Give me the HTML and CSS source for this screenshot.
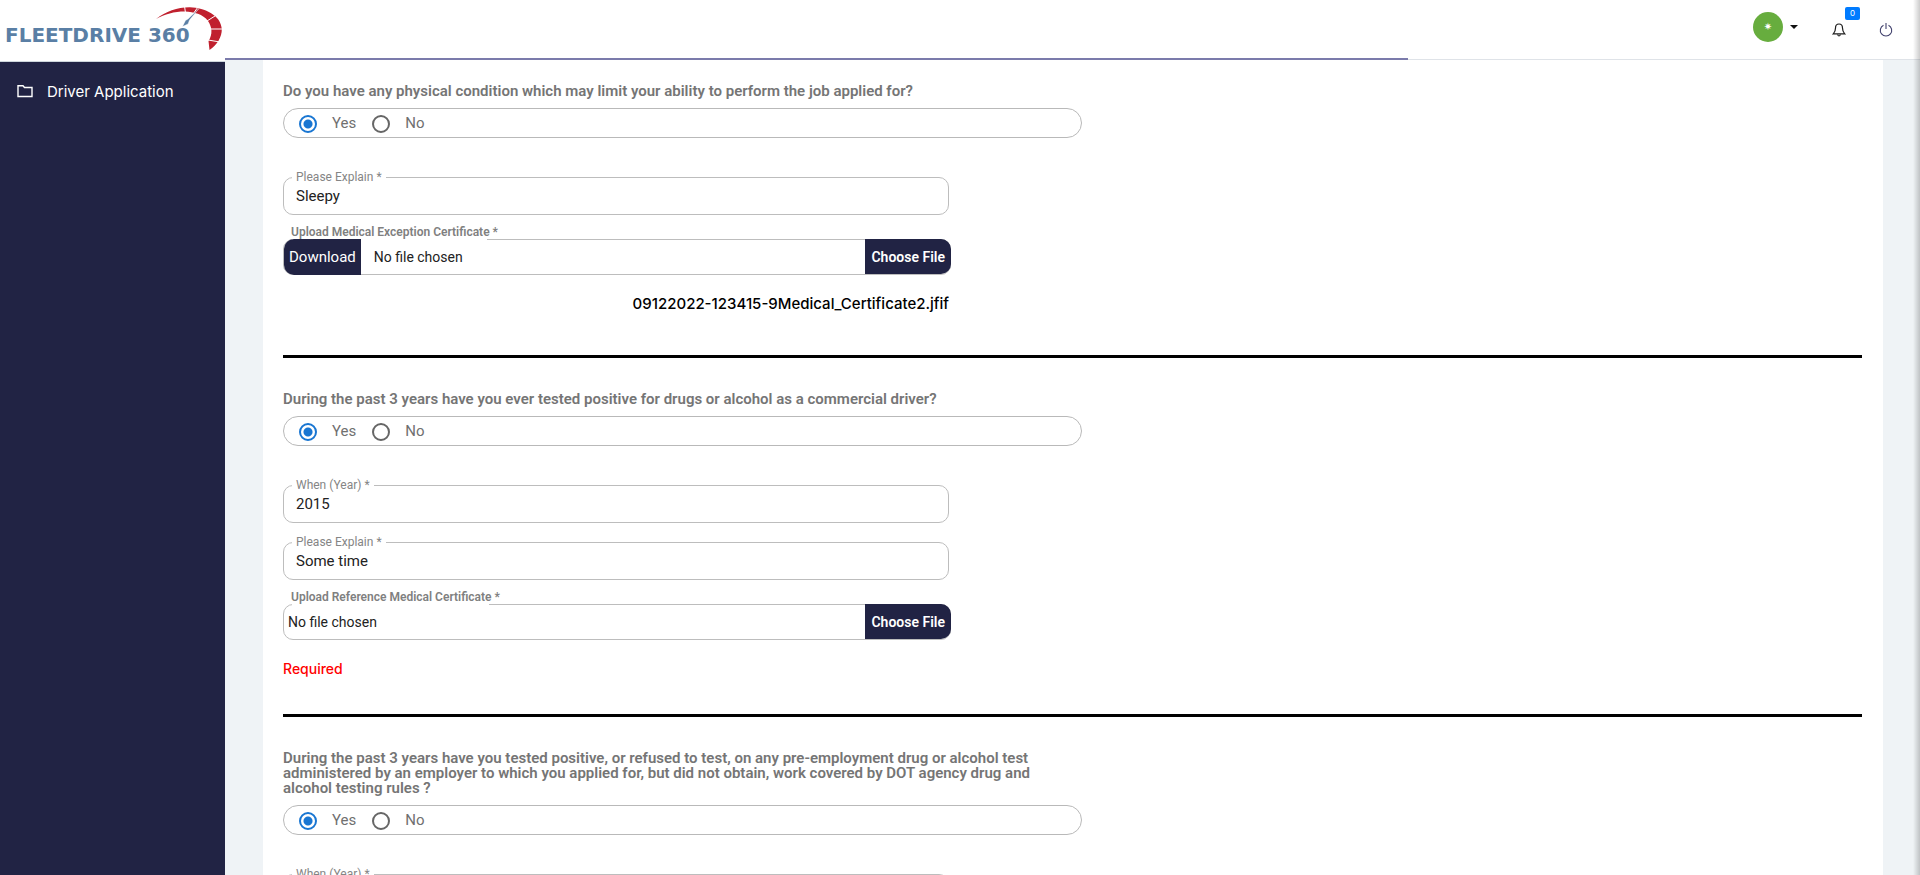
FILE: index.html
```html
<!DOCTYPE html>
<html lang="en">
<head>
<meta charset="utf-8">
<title>FleetDrive 360 - Driver Application</title>
<link rel="stylesheet" href="styles.css">
</head>
<body>
<div class="app">
  <aside class="sidebar">
    <a class="brand" href="#" aria-label="FleetDrive 360 home">
      <svg class="logo" width="225" height="60" viewBox="0 0 225 60">
        <text class="logo-text" x="5" y="42">FLEETDRIVE 360</text>
        <path d="M156 19C166 11 178 7 190 7.200C205 8 221 15 221.800 29C222 37 217 45 209.500 50L208.500 41C213 34 212 27 208 21C203 14 194 12 185 11.500C174 11.500 165 14 156 19Z" fill="#c0202e"/>
        <path d="M184.500 6l1 7M198 7l-5 7M215 16l-8 5M222 29h-11M220 42l-12-2" stroke="#fff" stroke-width="1"/>
        <path d="M199 8.500L189.500 20L188 24L182.500 26.500L185.500 20.500L188 19Z" fill="#5a7fa5" stroke="#fff" stroke-width=".4"/>
      </svg>
    </a>
    <nav class="menu">
      <a class="menu-link" href="#">
        <svg width="16" height="14" viewBox="0 0 16 14" fill="none" stroke="currentColor" stroke-width="1.400"><path d="M1 1.700h5l1.500 1.800H15v9H1z"/></svg>
        Driver Application
      </a>
    </nav>
  </aside>
  <div class="page">
    <header class="topbar">
      <button class="avatar-button" aria-label="Account menu">
        <span class="avatar">✷</span>
        <span class="caret"></span>
      </button>
      <button class="icon-button bell" aria-label="Notifications">
        <svg width="14" height="14" viewBox="0 0 14 14" fill="none" stroke="#1c1c1c" stroke-width="1.200"><path d="M7 1C4.700 1 3.500 2.800 3.500 5C3.500 8 2.800 9.300 1.300 10.800H12.700C11.200 9.300 10.500 8 10.500 5C10.500 2.800 9.300 1 7 1Z"/><path d="M5.500 11.500Q7 14.500 8.500 11.500"/></svg>
        <span class="count">0</span>
      </button>
      <button class="icon-button" aria-label="Sign out">
        <svg width="14" height="14" viewBox="0 0 14 14" fill="none" stroke="#42426e" stroke-width="1.100"><path d="M4.500 2.200A5.700 5.700 0 1 0 9.500 2.200M7 0V6"/></svg>
      </button>
      <div class="progress"></div>
    </header>
    <main class="content">
      <form class="card">
        <section class="question">
          <p class="prompt" id="q1">Do you have any physical condition which may limit your ability to perform the job applied for?</p>
          <div class="choices" role="radiogroup" aria-labelledby="q1">
            <label class="choice"><input type="radio" name="q1" checked>Yes</label>
            <label class="choice"><input type="radio" name="q1">No</label>
          </div>
          <div class="fields">
            <div class="field"><label for="explain1">Please Explain *</label><input id="explain1" type="text" value="Sleepy"></div>
            <div class="upload">
              <span class="upload-label" id="up1">Upload Medical Exception Certificate *</span>
              <button type="button" class="download">Download</button>
              <span class="chosen">No file chosen</span>
              <button type="button" class="choose" aria-describedby="up1">Choose File</button>
            </div>
            <p class="file-name">09122022-123415-9Medical_Certificate2.jfif</p>
          </div>
        </section>
        <hr>
        <section class="question">
          <p class="prompt" id="q2">During the past 3 years have you ever tested positive for drugs or alcohol as a commercial driver?</p>
          <div class="choices" role="radiogroup" aria-labelledby="q2">
            <label class="choice"><input type="radio" name="q2" checked>Yes</label>
            <label class="choice"><input type="radio" name="q2">No</label>
          </div>
          <div class="fields">
            <div class="field"><label for="year2">When (Year) *</label><input id="year2" type="text" value="2015"></div>
            <div class="field"><label for="explain2">Please Explain *</label><input id="explain2" type="text" value="Some time"></div>
            <div class="upload">
              <span class="upload-label" id="up2">Upload Reference Medical Certificate *</span>
              <span class="chosen">No file chosen</span>
              <button type="button" class="choose" aria-describedby="up2">Choose File</button>
            </div>
            <p class="error">Required</p>
          </div>
        </section>
        <hr>
        <section class="question">
          <p class="prompt" id="q3">During the past 3 years have you tested positive, or refused to test, on any pre-employment drug or alcohol test administered by an employer to which you applied for, but did not obtain, work covered by DOT agency drug and alcohol testing rules ?</p>
          <div class="choices" role="radiogroup" aria-labelledby="q3">
            <label class="choice"><input type="radio" name="q3" checked>Yes</label>
            <label class="choice"><input type="radio" name="q3">No</label>
          </div>
          <div class="fields">
            <div class="field"><label for="year3">When (Year) *</label><input id="year3" type="text"></div>
          </div>
        </section>
      </form>
    </main>
  </div>
  <div class="edge-shadow"></div>
</div>
</body>
</html>
```
FILE: styles.css
```css
* { box-sizing: border-box; }
body { margin: 0; font-family: Roboto, "Liberation Sans", sans-serif; background: #eff3f6; }
button { border: 0; background: none; padding: 0; font: inherit; cursor: pointer; }
p { margin: 0; }
svg { display: block; }

.app { display: flex; height: 100vh; overflow: hidden; position: relative; }
.sidebar { flex: none; width: 225px; background: #212344; }
.brand { display: block; height: 62px; background: #fff; border-bottom: 1px solid #ced6dc; }
.logo-text { font: bold 20px "DejaVu Sans", sans-serif; fill: #5a7fa5; }
.menu { padding: 18px 17px; }
.menu-link { display: flex; align-items: center; gap: 14px; height: 22px; color: #fff; font: 15px Inter, sans-serif; text-decoration: none; }

.page { flex: 1; min-width: 0; display: flex; flex-direction: column; }
.topbar { position: relative; flex: none; display: flex; justify-content: flex-end; align-items: center; height: 60px; padding-right: 27px; background: #fff; border-bottom: 1px solid #dfe3e8; }
.avatar-button { display: flex; align-items: center; gap: 7px; margin: 0 34px 6px 0; }
.avatar { width: 30px; height: 30px; border-radius: 50%; background: #67ad3e; color: #fff; font: 10px/30px "DejaVu Sans", sans-serif; text-align: center; }
.caret { border: 4px solid transparent; border-top-color: #111; border-bottom: 0; }
.icon-button { position: relative; padding-top: 1px; }
.bell { margin-right: 33px; }
.count { position: absolute; left: 13px; top: -15px; width: 15px; height: 13px; border-radius: 2px; background: #007bff; color: #fff; font: 8px/13px Inter, sans-serif; text-align: center; }
.progress { position: absolute; left: 0; bottom: -1px; width: 69.8%; height: 2px; background: #7b7bab; }

.content { flex: 1; min-height: 0; overflow-y: auto; scrollbar-width: none; padding: 0 37px 0 38px; }
.card { background: #fff; padding: 24px 21px 24px 20px; }
.question { display: flow-root; }
hr { height: 3px; margin: 0 0 34px; border: 0; background: #000; }
.prompt { max-width: 780px; color: #757575; font-size: 15px; font-weight: 600; line-height: 15px; }
.choices { display: flex; align-items: center; gap: 16px; max-width: 799px; height: 30px; margin-top: 9px; padding-left: 15px; border: 1px solid #b9b9b9; border-radius: 15px; }
.choice { display: flex; align-items: center; gap: 15px; color: #707070; font-size: 15px; line-height: 28px; }
.choice input { appearance: none; width: 18px; height: 18px; margin: 2px 0 0; border: 2px solid #666; border-radius: 50%; }
.choice input:checked { border-color: #1976d2; background: radial-gradient(circle, #1976d2 4px, #fff 5px); }

.fields { max-width: 666px; margin-top: 39px; }
.field { position: relative; margin-bottom: 19px; }
.field label { position: absolute; left: 9px; top: -8px; padding: 0 4px; background: #fff; color: #858585; font-size: 12px; line-height: 16px; }
.field input { display: block; width: 100%; height: 38px; padding: 0 12px; border: 1px solid #bdbdbd; border-radius: 10px; background: #fff; color: #222; font: 15px Roboto, sans-serif; }
.upload { position: relative; display: flex; align-items: center; height: 36px; margin: 24px -2px 0 0; border: 1px solid #bdbdbd; border-radius: 10px; }
.upload-label { position: absolute; left: 7px; top: -16px; color: #808080; font-size: 12px; font-weight: 600; line-height: 16px; }
.upload-label::after { content: ""; position: absolute; left: 1px; right: 11px; bottom: -1px; height: 2px; background: #fff; }
.download { align-self: stretch; position: relative; margin: -1px 9px -1px 0; padding: 0 5px; border-radius: 10px 0 0 10px; background: #212344; color: #fff; font-size: 15px; }
.chosen { flex: 1; padding-left: 4px; color: #222; font-size: 14px; }
.choose { align-self: stretch; margin: -1px -1px 0 0; padding: 0 6px; border-radius: 0 10px 10px 0; background: #212344; color: #fff; font-size: 14px; font-weight: 600; }
.file-name { height: 80px; padding-top: 19px; color: #000; font: 500 15px/20px Inter, sans-serif; text-align: right; }
.error { height: 74px; padding-top: 20px; color: #f00; font: 500 14px/18px Inter, sans-serif; }
.edge-shadow { position: absolute; top: 0; right: 0; bottom: 0; width: 7px; background: linear-gradient(to right, #0000, #0003); }
```
